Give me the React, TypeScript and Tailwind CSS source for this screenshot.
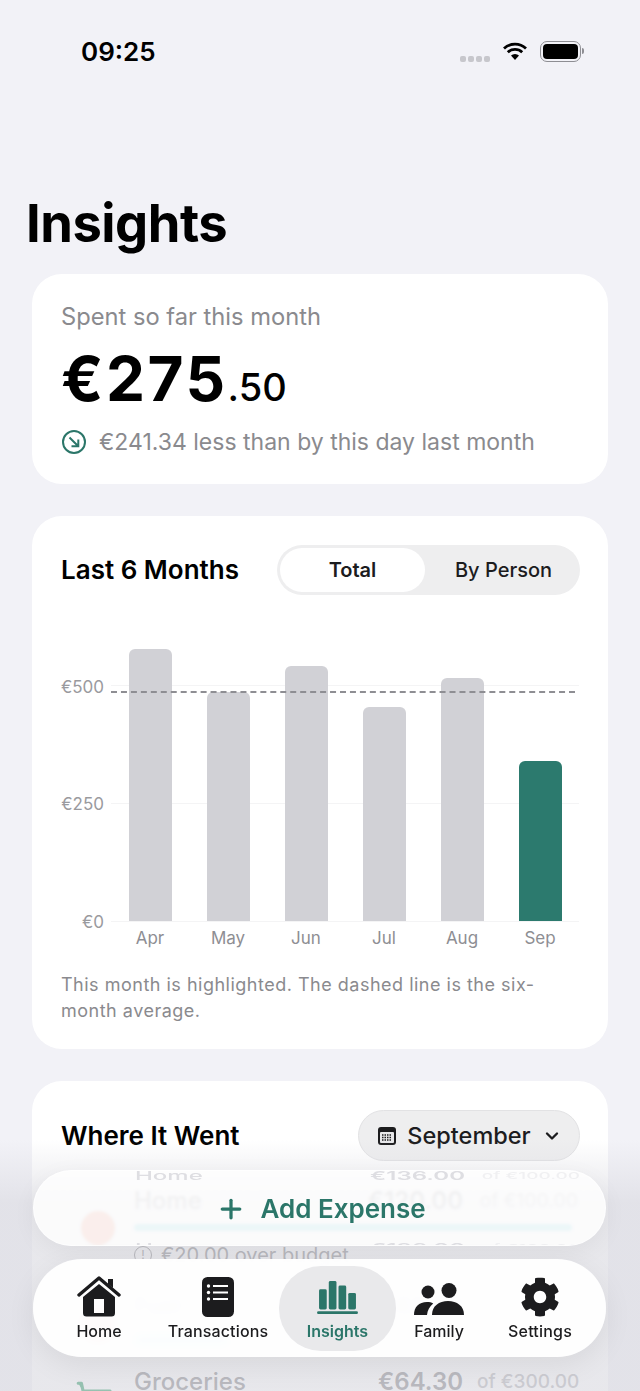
import { ChevronDown, Plus, ShoppingCart } from "lucide-react"
import { FaCog } from "react-icons/fa"

const months = [
    { label: "Apr", height: 272 },
    { label: "May", height: 229 },
    { label: "Jun", height: 255 },
    { label: "Jul", height: 214 },
    { label: "Aug", height: 243 },
    { label: "Sep", height: 160, current: true },
]

const HomeIcon = () => (
    <svg width="44" height="42" viewBox="0 0 44 42">
        <path d="M31 4h5v9l-5-4z" fill="#1c1c1e" />
        <path d="M2 20 22 3l20 17" fill="none" stroke="#1c1c1e" strokeWidth="3.4" strokeLinecap="round" strokeLinejoin="round" />
        <path fillRule="evenodd" d="M22 9 38 22v16a3.5 3.5 0 0 1-3.5 3.5h-25A3.5 3.5 0 0 1 6 38V22zM17 24v14h10V24z" fill="#1c1c1e" />
    </svg>
)

const ListIcon = () => (
    <svg width="32" height="40" viewBox="0 0 32 40">
        <rect width="32" height="40" rx="5.5" fill="#1c1c1e" />
        <circle cx="6.500" cy="9" r="1.700" fill="#fff" />
        <circle cx="6.500" cy="15.500" r="1.700" fill="#fff" />
        <circle cx="6.500" cy="22" r="1.700" fill="#fff" />
        <path d="M11 9h15M11 15.500h15M11 22h15" stroke="#fff" strokeWidth="1.800" />
    </svg>
)

const ChartIcon = () => (
    <svg width="41" height="33" viewBox="0 0 40 36" preserveAspectRatio="none">
        <rect x="2" y="9" width="7.500" height="22" rx="1.500" fill="#2b7669" />
        <rect x="11.500" y="0" width="7.500" height="31" rx="1.500" fill="#2b7669" />
        <rect x="21" y="5" width="7.500" height="26" rx="1.500" fill="#2b7669" />
        <rect x="30.500" y="13" width="7.500" height="18" rx="1.500" fill="#2b7669" />
        <rect x="0" y="33" width="40" height="3" rx="1.500" fill="#2b7669" />
    </svg>
)

const FamilyIcon = () => (
    <svg width="50" height="32" viewBox="0 0 50 32">
        <circle cx="14" cy="9" r="6.500" fill="#1c1c1e" />
        <circle cx="35" cy="7.500" r="7.500" fill="#1c1c1e" />
        <path d="M0 32c0-8 5-13 13-13 2.500 0 4.500.5 6.200 1.400C15.500 23.500 13.400 27.500 13 32z" fill="#1c1c1e" />
        <path d="M18 32c0-9 7-14 16-14s16 5 16 14z" fill="#1c1c1e" />
    </svg>
)

const Wifi = () => (
    <svg width="26" height="20" viewBox="0 0 26 20">
        <path d="M2 7.500a16 16 0 0 1 22 0M5.800 11.300a10.500 10.500 0 0 1 14.400 0" fill="none" stroke="#000" strokeWidth="2.800" />
        <path d="M9 14.500a5.800 5.800 0 0 1 8 0L13 19z" fill="#000" />
    </svg>
)

const Ghost = ({ className }: { className: string }) => (
    <div className={`absolute left-[101px] flex h-[22px] w-[445px] origin-center scale-y-[0.5] items-center text-[24px] font-medium text-[#dedee2] blur-[0.6px] ${className}`}>
        <span className="flex-1">Home</span>
        <span className="font-semibold">€136.00</span>
        <span className="ml-[14px] w-[101px] whitespace-nowrap text-right text-[19px] text-[#f0f0f2]">of €100.00</span>
    </div>
)

const App = () => {
    return (
        <div className="relative h-[1391px] w-[640px] overflow-hidden bg-[#f2f2f7] font-['Inter',sans-serif]">
            <div className="flex h-[104px] items-start justify-between pl-[81px] pr-[56px] pt-[35px]">
                <span className="text-[26px] font-semibold leading-[34px] text-black">09:25</span>
                <div className="flex items-center pt-[5px]">
                    <div className="mr-[12px] mt-[16px] flex gap-[2px]">
                        <span className="size-[6px] rounded-[2px] bg-[#c7c7cc]" />
                        <span className="size-[6px] rounded-[2px] bg-[#c7c7cc]" />
                        <span className="size-[6px] rounded-[2px] bg-[#c7c7cc]" />
                        <span className="size-[6px] rounded-[2px] bg-[#c7c7cc]" />
                    </div>
                    <Wifi />
                    <div className="ml-[12px] flex items-center">
                        <div className="h-[21px] w-[41px] rounded-[7px] border-[1.500px] border-[#8e8e93] p-[2px]">
                            <div className="h-full w-full rounded-[4px] bg-black" />
                        </div>
                        <div className="ml-[1px] h-[6px] w-[2px] rounded-r-sm bg-[#8e8e93]" />
                    </div>
                </div>
            </div>

            <h1 className="mt-[87px] pl-[26px] text-[52.500px] font-bold leading-[64px] tracking-[-0.5px] text-black">Insights</h1>

            <div className="mx-[32px] mt-[19px] h-[210px] rounded-[30px] bg-white px-[29px] pt-[28px]">
                <div className="text-[23.700px] leading-[30px] text-[#8a8a8e]">Spent so far this month</div>
                <div className="mt-[14px] flex h-[66px] items-baseline font-bold text-black">
                    <span className="text-[62px] leading-[66px] tracking-[2.500px]">€275</span>
                    <span className="text-[38px] font-medium leading-[40px]">.50</span>
                </div>
                <div className="mt-[15px] flex items-center gap-[12px]">
                    <svg width="26" height="26" viewBox="0 0 26 26" fill="none" stroke="#2b7669">
                        <circle cx="13" cy="13" r="11" strokeWidth="2" />
                        <path d="M8.500 8.500l8.500 8.500M17.300 10.500v6.800h-6.800" strokeWidth="2" />
                    </svg>
                    <span className="text-[23px] leading-[30px] text-[#8a8a8e]">€241.34 less than by this day last month</span>
                </div>
            </div>

            <div className="mx-[32px] mt-[32px] h-[533px] rounded-[30px] bg-white px-[29px] pt-[29px]">
                <div className="flex items-center justify-between">
                    <span className="text-[26px] font-semibold leading-[32px] text-black">Last 6 Months</span>
                    <div className="-mr-[1px] flex h-[50px] w-[303px] rounded-full bg-[#eeeeef] p-[3px] text-[20px] font-medium text-[#1c1c1e]">
                        <div className="flex w-[145px] items-center justify-center rounded-full bg-white font-semibold">Total</div>
                        <div className="flex flex-1 items-center justify-center pl-[5px]">By Person</div>
                    </div>
                </div>

                <div className="relative mt-[35px] flex h-[301px]">
                    <div className="relative w-[50px] text-right text-[17px] leading-[22px] text-[#9a9a9e]">
                        <span className="absolute right-[7px] top-[46px]">€500</span>
                        <span className="absolute right-[7px] top-[163px]">€250</span>
                        <span className="absolute right-[7px] top-[281px]">€0</span>
                    </div>
                    <div className="relative h-[296px] flex-1">
                        <div className="absolute inset-x-0 top-[55px] border-t border-[#f4f4f5]" />
                        <div className="absolute inset-x-0 top-[173px] border-t border-[#f4f4f5]" />
                        <div className="absolute inset-x-0 top-[291px] border-t border-[#f4f4f5]" />
                        <div className="grid h-[291px] grid-cols-6 items-end">
                            {months.map((month) => (
                                <div
                                    key={month.label}
                                    className={`relative mx-auto w-[43px] rounded-t-[6px] ${month.current ? "bg-[#2c7a6e]" : "bg-[#d1d1d6]"}`}
                                    style={{ height: month.height }}
                                />
                            ))}
                        </div>
                        <div className="absolute left-0 right-[4px] top-[61px] border-t-2 border-dashed border-[#8e8e93]" />
                    </div>
                </div>
                <div className="ml-[50px] -mt-[4px] grid grid-cols-6 text-center text-[17px] leading-[22px] text-[#8e8e93]">
                    {months.map((month) => (
                        <span key={month.label}>{month.label}</span>
                    ))}
                </div>
                <p className="mt-[23px] text-[18px] leading-[26px] tracking-[0.5px] text-[#8a8a8e]">
                    This month is highlighted. The dashed line is the six-month average.
                </p>
            </div>

            <div className="mx-[32px] mt-[32px] h-[400px] rounded-[30px] bg-white px-[29px] pt-[29px]">
                <div className="flex items-center justify-between">
                    <span className="text-[26px] font-semibold leading-[32px] text-black">Where It Went</span>
                    <div className="-mr-[1px] flex h-[51px] w-[222px] items-center justify-center gap-[11px] rounded-full border border-[#e2e2e4] bg-[#eeeeef] pl-[2px] text-[23.500px] font-medium text-[#1c1c1e]">
                        <svg width="18" height="18" viewBox="0 0 18 18">
                            <rect width="18" height="18" rx="3" fill="#1c1c1e" />
                            <rect x="2" y="5" width="14" height="11" rx="1" fill="#e8e8ea" />
                            <path d="M4 8h10M4 10.500h10M4 13h10" stroke="#1c1c1e" strokeWidth="1.300" strokeDasharray="1.500 1" />
                        </svg>
                        <span>September</span>
                        <ChevronDown size={20} strokeWidth={2.800} />
                    </div>
                </div>

                <div className="mt-[24px] flex">
                    <div className="flex w-[73px] justify-center pt-[26px]">
                        <div className="flex size-[34px] items-center justify-center rounded-full bg-[#f26a3c]" />
                    </div>
                    <div className="w-[444px]">
                        <div className="flex h-[32px] items-center text-[24px] font-medium text-[#8a8a8e]">
                            <span className="flex-1">Home</span>
                            <span className="font-semibold">€120.00</span>
                            <span className="ml-[14px] w-[101px] whitespace-nowrap text-right text-[19px] text-[#b8b8bc]">of €100.00</span>
                        </div>
                        <div className="mt-[7px] h-[7px] w-[438px] rounded-full bg-[#4fd0d8]" />
                        <div className="mt-[12px] flex h-[24px] items-center gap-[9px] text-[20px] text-[#8a8a8e]">
                            <span className="flex size-[18px] items-center justify-center rounded-full border border-[#8a8a8e] text-[12px]">!</span>
                            <span>€20.00 over budget</span>
                        </div>
                    </div>
                </div>
                <div className="mt-[23px] flex">
                    <div className="flex w-[73px] justify-center pt-[18px]">
                        <div className="size-[34px] rounded-full bg-[#ef5a50]" />
                    </div>
                    <div className="w-[444px]">
                        <div className="flex h-[32px] items-center text-[24px] font-medium text-[#8a8a8e]">
                            <span className="flex-1">Fuel</span>
                            <span className="font-semibold">€42.00</span>
                            <span className="ml-[14px] w-[101px] whitespace-nowrap text-right text-[19px] text-[#b8b8bc]">of €150.00</span>
                        </div>
                        <div className="mt-[13px] h-[10px] w-[95px] rounded-full bg-[#4fd0d8]" />
                    </div>
                </div>
                <div className="mt-[28px] flex">
                    <div className="flex w-[73px] justify-center pr-[8px] pt-[7px] text-[#34a06c]">
                        <ShoppingCart size={38} fill="#34a06c" />
                    </div>
                    <div className="flex h-[18px] w-[444px] items-center text-[24px] font-medium leading-[18px] text-[#8a8a8e]">
                        <span className="flex-1">Groceries</span>
                        <span className="font-semibold">€64.30</span>
                        <span className="ml-[14px] w-[101px] whitespace-nowrap text-right text-[19px] text-[#b8b8bc]">of €300.00</span>
                    </div>
                </div>
            </div>

            <div className="pointer-events-none absolute inset-x-0 top-[1140px] h-[251px] bg-gradient-to-b from-[#d8d8df00] via-[#d8d8df99] via-[25%] to-[#d8d8df99]" />

            <div className="absolute left-[33px] top-[1170px] flex h-[76px] w-[573px] items-center justify-center gap-[14px] overflow-hidden rounded-full border border-white/70 bg-white/80 pl-[3px] pt-[1px] shadow-[0_6px_24px_rgba(0,0,0,0.05)] backdrop-blur-[1.500px]">
                <Ghost className="-top-[6px]" />
                <Ghost className="-bottom-[14px]" />
                <Plus size={30} strokeWidth={2.600} color="#2b7669" />
                <span className="relative text-[26px] font-semibold leading-[34px] text-[#2b7669]">Add Expense</span>
            </div>

            <div className="absolute left-[33px] top-[1259px] flex h-[98px] w-[573px] items-center rounded-full bg-white/95 pl-[6px] shadow-[0_8px_30px_rgba(0,0,0,0.07)] backdrop-blur-[4px]">
                <div className="flex h-[85px] w-[120px] flex-col items-center justify-end gap-[3px] pb-[9px]">
                    <HomeIcon />
                    <span className="text-[16px] font-medium leading-[22px] text-[#1c1c1e]">Home</span>
                </div>
                <div className="flex h-[85px] w-[118px] flex-col items-center justify-end gap-[3px] pb-[9px]">
                    <ListIcon />
                    <span className="text-[16px] font-medium leading-[22px] tracking-[0.15px] text-[#1c1c1e]">Transactions</span>
                </div>
                <div className="ml-[2px] flex h-[85px] w-[117px] flex-col items-center justify-end gap-[6px] rounded-[42px] bg-[#e9e9eb] pb-[9px]">
                    <ChartIcon />
                    <span className="text-[16px] font-semibold leading-[22px] text-[#2b7669]">Insights</span>
                </div>
                <div className="flex h-[85px] w-[86px] flex-col items-center justify-end gap-[5px] pb-[9px]">
                    <FamilyIcon />
                    <span className="text-[16px] font-medium leading-[22px] text-[#1c1c1e]">Family</span>
                </div>
                <div className="flex h-[85px] w-[116px] flex-col items-center justify-end gap-[3px] pb-[9px]">
                    <FaCog size={40} color="#1c1c1e" />
                    <span className="text-[16px] font-medium leading-[22px] tracking-[0.2px] text-[#1c1c1e]">Settings</span>
                </div>
            </div>
        </div>
    )
}

export default App
